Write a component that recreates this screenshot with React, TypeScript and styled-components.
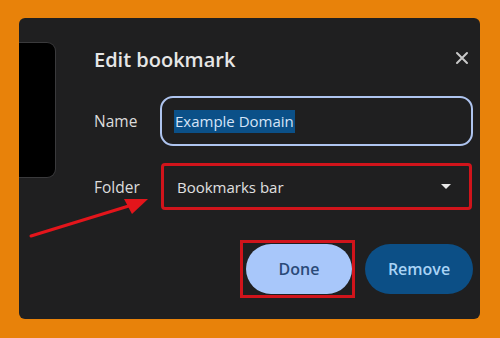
import React from "react";
import styled, { createGlobalStyle } from "styled-components";

const Global = createGlobalStyle`
  html, body { margin: 0; padding: 0; }
  body { background: #e8820a; font-family: "Open Sans", "Noto Sans", sans-serif; }
`;

const Page = styled.div`
  width: 500px;
  height: 338px;
  box-sizing: border-box;
  padding: 18px 20px 19px 19px;
  background: #e8820a;
  position: relative;
`;

const Dialog = styled.div`
  height: 100%;
  box-sizing: border-box;
  background: #1f1f20;
  border-radius: 6px;
  display: flex;
  align-items: flex-start;
`;

const Backdrop = styled.div`
  width: 37px;
  height: 136px;
  margin-top: 24px;
  flex: none;
  background: #000;
  border: 1px solid #3a3a3c;
  border-left: none;
  border-radius: 0 9px 9px 0;
  box-sizing: border-box;
`;

const Content = styled.div`
  flex: 1;
  padding: 28px 7px 0 38px;
  display: flex;
  flex-direction: column;
`;

const Header = styled.div`
  display: flex;
  align-items: center;
  justify-content: space-between;
  height: 27px;
`;

const Title = styled.h1`
  margin: 0;
  font-size: 20px;
  font-weight: 600;
  color: #e6e6e6;
  letter-spacing: 0;
`;

const Close = styled.button`
  background: none;
  border: none;
  padding: 0;
  margin: 0 4px 3px 0;
  width: 14px;
  height: 14px;
  display: flex;
  color: #c8c8c8;
  cursor: pointer;
`;

const Form = styled.div`
  margin-top: 23px;
  display: grid;
  grid-template-columns: 66px 1fr;
  row-gap: 17px;
  align-items: center;
`;

const Label = styled.span`
  font-size: 15.5px;
  font-weight: 500;
  color: #dcdcdc;
`;

const Input = styled.div`
  height: 50px;
  box-sizing: border-box;
  border: 2px solid #aec4ef;
  border-radius: 13px;
  display: flex;
  align-items: center;
  padding-left: 12px;
`;

const Selected = styled.span`
  background: #0b5088;
  color: #d6e4f7;
  font-size: 15px;
  font-weight: 500;
  line-height: 23px;
  padding: 0 1px;
`;

const Select = styled.div<{ $highlight?: boolean }>`
  height: 47px;
  margin-left: 1px;
  margin-right: 1px;
  box-sizing: border-box;
  border: 3px solid ${(p) => (p.$highlight ? "#d0141b" : "#5f6368")};
  border-radius: 4px;
  display: flex;
  align-items: center;
  justify-content: space-between;
  padding: 0 18px 0 13px;
  font-size: 15px;
  font-weight: 500;
  color: #e0e0e0;
`;

const Caret = styled.span`
  width: 0;
  height: 0;
  border-left: 5px solid transparent;
  border-right: 5px solid transparent;
  border-top: 5px solid #e8e8e8;
`;

const Actions = styled.div`
  margin-top: 30px;
  display: flex;
  justify-content: flex-end;
  align-items: center;
  gap: 10px;
`;

const Highlight = styled.div`
  border: 3px solid #d0141b;
  padding: 1px 0 1px 3px;
  display: flex;
  box-sizing: border-box;
  width: 115px;
  height: 58px;
`;

const Button = styled.button<{ $primary?: boolean }>`
  height: 50px;
  width: 108px;
  border: none;
  border-radius: 25px;
  font-family: inherit;
  font-size: 16px;
  font-weight: 600;
  background: ${(p) => (p.$primary ? "#a8c7fa" : "#0c4f86")};
  color: ${(p) => (p.$primary ? "#2a4a78" : "#a9d3f5")};
  cursor: pointer;
`;

const Arrow = styled.svg`
  position: absolute;
  left: 0;
  top: 0;
  pointer-events: none;
`;

export default function App() {
  return (
    <>
      <Global />
      <Page>
        <Dialog>
          <Backdrop />
          <Content>
            <Header>
              <Title>Edit bookmark</Title>
              <Close aria-label="Close">
                <svg width="14" height="14" viewBox="0 0 14 14">
                  <path d="M2 2 L12 12 M12 2 L2 12" stroke="currentColor" strokeWidth="2" strokeLinecap="round" />
                </svg>
              </Close>
            </Header>
            <Form>
              <Label>Name</Label>
              <Input>
                <Selected>Example Domain</Selected>
              </Input>
              <Label>Folder</Label>
              <Select $highlight>
                <span>Bookmarks bar</span>
                <Caret />
              </Select>
            </Form>
            <Actions>
              <Highlight>
                <Button $primary>Done</Button>
              </Highlight>
              <Button>Remove</Button>
            </Actions>
          </Content>
        </Dialog>
        <Arrow width="500" height="338" viewBox="0 0 500 338">
          <line x1="31" y1="236" x2="132" y2="205" stroke="#e3151b" strokeWidth="3" strokeLinecap="round" />
          <polygon points="148,199 124,199 132,214" fill="#e3151b" />
        </Arrow>
      </Page>
    </>
  );
}
